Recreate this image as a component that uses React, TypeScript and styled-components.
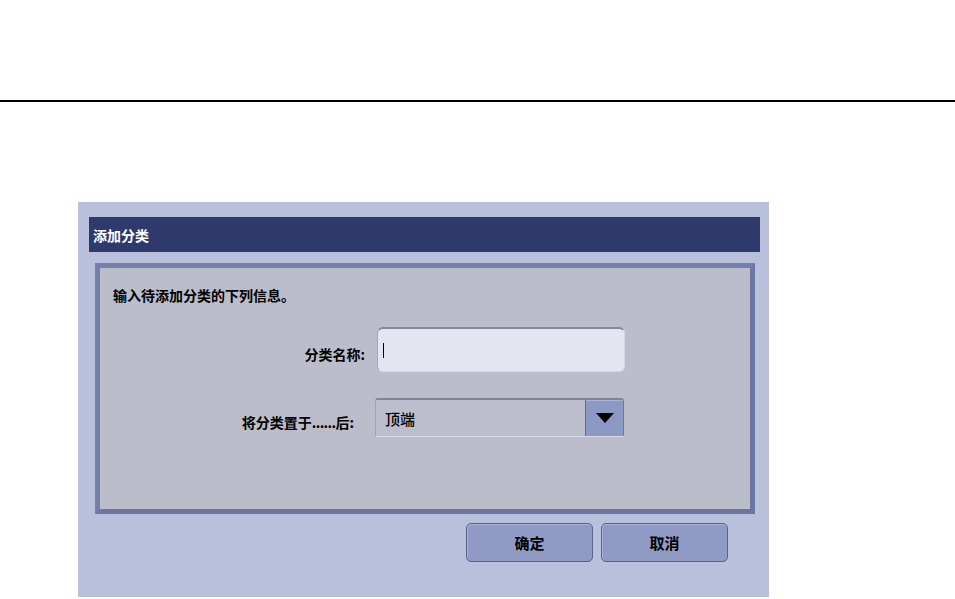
import React from 'react';
import styled, { createGlobalStyle } from 'styled-components';

const GlobalStyle = createGlobalStyle`
  html, body {
    margin: 0;
    padding: 0;
    background: #ffffff;
  }
  body {
    font-family: "Noto Sans CJK SC", "Liberation Sans", sans-serif;
    color: #000;
  }
`;

const Page = styled.div`
  width: 955px;
  height: 599px;
  overflow: hidden;
  padding-top: 100px;
  box-sizing: border-box;
`;

const Rule = styled.div`
  height: 2px;
  background: #000;
`;

const Dialog = styled.section`
  margin: 100px 0 0 78px;
  width: 691px;
  height: 395px;
  box-sizing: border-box;
  padding: 15px 9px 0 11px;
  background: #b9c0dc;
`;

const TitleBar = styled.header`
  height: 35px;
  display: flex;
  align-items: center;
  padding-left: 4px;
  background: #2e3a6c;
  color: #ffffff;
  font-size: 14px;
  font-weight: 700;
`;

const Panel = styled.div`
  margin: 11px 0 0 6px;
  width: 660px;
  height: 251px;
  box-sizing: border-box;
  border: 5px solid #6b76a1;
  border-top-color: #7480aa;
  border-left-color: #737fa9;
  background: #bbbdcb;
  padding: 17px 0 0 13px;
`;

const Intro = styled.p`
  margin: 0;
  font-size: 14px;
  line-height: 20px;
  font-weight: 700;
`;

const Form = styled.div`
  margin-top: 22px;
  display: flex;
  flex-direction: column;
  gap: 26px;
`;

const Row = styled.div`
  display: flex;
  align-items: center;
  margin-left: -13px;
`;

const Label = styled.label<{ $width: number; $gap: number }>`
  width: ${(p) => p.$width}px;
  margin-right: ${(p) => p.$gap}px;
  padding-top: 8px;
  text-align: right;
  font-size: 14px;
  font-weight: 700;
  white-space: nowrap;
`;

const Dots = styled.span`
  letter-spacing: -0.6px;
`;

const TextInput = styled.div`
  width: 248px;
  height: 45px;
  box-sizing: border-box;
  display: flex;
  align-items: center;
  padding-left: 5px;
  background: #e3e5f1;
  border-radius: 6px;
  border-top: 2px solid #858898;
  border-left: 1px solid #a4a7b6;
  border-right: 1px solid #d6d8e4;
  border-bottom: 1px solid #d6d8e4;
`;

const Caret = styled.span`
  width: 1px;
  height: 15px;
  background: #000;
`;

const Select = styled.div`
  width: 249px;
  height: 39px;
  box-sizing: border-box;
  display: flex;
  align-items: stretch;
  background: #bcbecc;
  border-top: 2px solid #818495;
  border-left: 1px solid #9ea1b0;
  border-bottom: 1px solid #dadce7;
  border-radius: 3px 3px 0 0;
`;

const SelectValue = styled.span`
  flex: 1;
  display: flex;
  align-items: center;
  padding-left: 9px;
  font-size: 15px;
  font-weight: 500;
`;

const ArrowButton = styled.span`
  width: 37px;
  display: flex;
  align-items: center;
  justify-content: center;
  background: #8c99c4;
  border-left: 1px solid #5f6992;
  border-right: 1px solid #6e78a0;
  box-shadow: inset 0 1px 0 #a9b3d6;
`;

const ButtonRow = styled.div`
  margin: 9px 0 0 6px;
  width: 660px;
  box-sizing: border-box;
  padding-right: 27px;
  display: flex;
  justify-content: flex-end;
  gap: 8px;
`;

const Button = styled.button`
  width: 127px;
  height: 39px;
  box-sizing: border-box;
  background: #8f9bc5;
  border: 1px solid #5b628e;
  border-radius: 5px;
  box-shadow: inset 1px 1px 0 #a8b2d8;
  font-family: "Noto Sans CJK SC", sans-serif;
  font-size: 15px;
  font-weight: 700;
  color: #000;
  padding: 0;
`;

export default function App() {
  return (
    <Page>
      <GlobalStyle />
      <Rule />
      <Dialog>
        <TitleBar>添加分类</TitleBar>
        <Panel>
          <Intro>输入待添加分类的下列信息。</Intro>
          <Form>
            <Row>
              <Label $width={265} $gap={12}>分类名称:</Label>
              <TextInput>
                <Caret />
              </TextInput>
            </Row>
            <Row>
              <Label $width={254} $gap={21}>
                将分类置于<Dots>......</Dots>后:
              </Label>
              <Select>
                <SelectValue>顶端</SelectValue>
                <ArrowButton>
                  <svg width="18" height="10" viewBox="0 0 18 10">
                    <polygon points="0,0 18,0 9,10" fill="#000" />
                  </svg>
                </ArrowButton>
              </Select>
            </Row>
          </Form>
        </Panel>
        <ButtonRow>
          <Button>确定</Button>
          <Button>取消</Button>
        </ButtonRow>
      </Dialog>
    </Page>
  );
}
